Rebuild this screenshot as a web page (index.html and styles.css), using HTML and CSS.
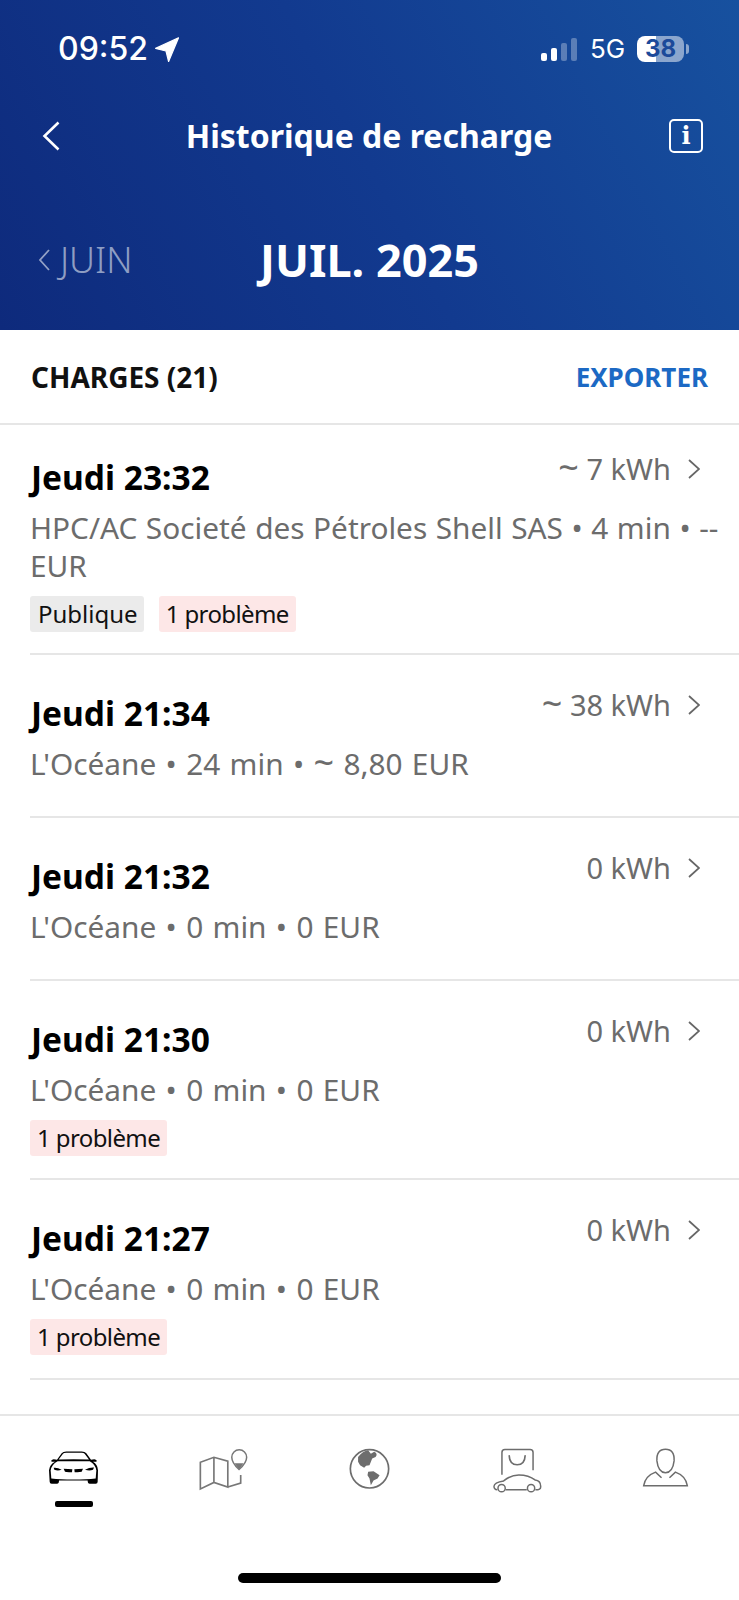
FILE: index.html
```html
<!DOCTYPE html>
<html lang="fr">
<head>
<meta charset="utf-8">
<title>Historique de recharge</title>
<link rel="stylesheet" href="styles.css">
</head>
<body>
<div class="app">
  <header class="hero">
    <div class="status">
      <div class="status-left">
        <span class="clock">09:52</span>
        <svg class="loc" viewBox="0 0 24 25"><path d="M23.5 .8 L13.6 24.6 L11 14 L.6 11.4 Z" fill="#fff" stroke="#fff" stroke-width="1.2" stroke-linejoin="round"/></svg>
      </div>
      <div class="status-right">
        <div class="signal"><i class="b1"></i><i class="b2"></i><i class="b3"></i><i class="b4"></i></div>
        <span class="net">5G</span>
        <div class="battery"><span class="batt-num">38</span></div>
        <span class="nub"></span>
      </div>
    </div>
    <div class="navbar">
      <svg class="back" viewBox="0 0 18 30"><path d="M16.5 1.5 L2.5 15 L16.5 28.5" fill="none" stroke="#fff" stroke-width="2.6"/></svg>
      <h1 class="nav-title">Historique de recharge</h1>
      <div class="info"><span class="info-i">i</span></div>
    </div>
    <div class="months">
      <div class="prev">
        <svg class="prev-chev" viewBox="0 0 12 22"><path d="M11 1 L2 11 L11 21" fill="none" stroke="#fff" stroke-width="1.8"/></svg>
        <span>JUIN</span>
      </div>
      <div class="current">JUIL. 2025</div>
    </div>
  </header>

  <div class="section-bar">
    <span class="section-title">CHARGES (21)</span>
    <span class="export">EXPORTER</span>
  </div>

  <main class="list">
    <article class="row row-a">
      <div class="row-top">
        <span class="when">Jeudi 23:32</span>
        <span class="energy"><span class="val"><span class="tilde">~</span> 7 kWh</span><svg class="chev" viewBox="0 0 12 20"><path d="M1 1 L11 10 L1 19" fill="none" stroke="#666" stroke-width="1.7"/></svg></span>
      </div>
      <p class="desc">HPC/AC Societé des Pétroles Shell SAS • 4 min • -- EUR</p>
      <div class="tags"><span class="tag tag-grey">Publique</span><span class="tag tag-red">1 problème</span></div>
    </article>
    <article class="row row-b">
      <div class="row-top">
        <span class="when">Jeudi 21:34</span>
        <span class="energy"><span class="val"><span class="tilde">~</span> 38 kWh</span><svg class="chev" viewBox="0 0 12 20"><path d="M1 1 L11 10 L1 19" fill="none" stroke="#666" stroke-width="1.7"/></svg></span>
      </div>
      <p class="desc desc-short">L'Océane • 24 min • <span class="tilde">~</span> 8,80 EUR</p>
    </article>
    <article class="row row-b">
      <div class="row-top">
        <span class="when">Jeudi 21:32</span>
        <span class="energy"><span class="val">0 kWh</span><svg class="chev" viewBox="0 0 12 20"><path d="M1 1 L11 10 L1 19" fill="none" stroke="#666" stroke-width="1.7"/></svg></span>
      </div>
      <p class="desc desc-short">L'Océane • 0 min • 0 EUR</p>
    </article>
    <article class="row row-c">
      <div class="row-top">
        <span class="when">Jeudi 21:30</span>
        <span class="energy"><span class="val">0 kWh</span><svg class="chev" viewBox="0 0 12 20"><path d="M1 1 L11 10 L1 19" fill="none" stroke="#666" stroke-width="1.7"/></svg></span>
      </div>
      <p class="desc desc-short">L'Océane • 0 min • 0 EUR</p>
      <div class="tags"><span class="tag tag-red">1 problème</span></div>
    </article>
    <article class="row row-c">
      <div class="row-top">
        <span class="when">Jeudi 21:27</span>
        <span class="energy"><span class="val">0 kWh</span><svg class="chev" viewBox="0 0 12 20"><path d="M1 1 L11 10 L1 19" fill="none" stroke="#666" stroke-width="1.7"/></svg></span>
      </div>
      <p class="desc desc-short">L'Océane • 0 min • 0 EUR</p>
      <div class="tags"><span class="tag tag-red">1 problème</span></div>
    </article>
  </main>

  <nav class="tabbar">
    <div class="tab tab-car">
      <svg class="ic-car" viewBox="58 68 147 98">
        <path d="M60 160 L58 125 Q60 108 76 100 L66 100 Q62 94 72 92 L82 94 L96 74 Q100 69 110 69 L156 69 Q166 69 170 74 L184 94 L194 92 Q204 94 200 100 L190 100 Q204 108 205 125 L204 160 Q204 166 198 166 L180 166 Q174 166 174 156 L88 156 Q88 166 82 166 L66 166 Q60 166 60 160 Z" fill="#000"/>
        <path d="M65 150 L63 126 Q65 108 84 98 L180 98 Q198 108 200 126 L198 150 Q170 153 131 153 Q92 153 65 150 Z" fill="#fff"/>
        <path d="M87 93 L100 76 Q102 73 110 73 L156 73 Q162 73 165 76 L178 93 Q131 91 87 93 Z" fill="#fff"/>
        <path d="M72 118 Q82 116 96 124 Q84 128 74 124 Z M102 121 L128 122 L127 131 Q112 132 106 130 Z M134 122 L160 121 L156 130 Q148 132 135 131 Z M166 124 Q180 116 193 117 L190 124 Q180 128 166 124 Z" fill="#000"/>
      </svg>
      <span class="active-bar"></span>
    </div>
    <div class="tab tab-map">
      <svg class="ic-map" viewBox="505 52 155 130">
        <path d="M511 176 L511 95 L552 80 L594 92 L594 170 L552 156 L511 176 Z M552 80 L552 156 M594 170 L633 158 L633 134" fill="none" stroke="#777" stroke-width="5"/>
        <path d="M628 117 Q606 97 606 80 A22 22 0 1 1 651 80 Q651 97 628 117 Z" fill="none" stroke="#777" stroke-width="4.5"/>
        <path d="M614 98 L642 98 L628 117 Z" fill="#777"/>
      </svg>
    </div>
    <div class="tab">
      <svg class="ic-globe" viewBox="57 55 122 122">
        <circle cx="118" cy="117" r="57" fill="#fff" stroke="#6d6d6d" stroke-width="5"/>
        <path d="M84 82 Q98 64 114 62 L122 72 L132 66 Q144 72 136 82 L126 86 L118 106 L108 108 L102 114 L90 106 L84 96 Z" fill="#6d6d6d"/>
        <path d="M114 126 L130 124 L148 136 L142 146 L130 152 L122 166 L118 146 L112 136 Z" fill="#6d6d6d"/>
      </svg>
    </div>
    <div class="tab">
      <svg class="ic-bag" viewBox="488 55 148 135">
        <path d="M515 135 L515 68 Q515 59 524 59 L600 59 Q609 59 609 68 L609 122" fill="none" stroke="#6d6d6d" stroke-width="4.5"/>
        <path d="M537 78 Q538 105 561 105 Q584 105 585 78" fill="none" stroke="#6d6d6d" stroke-width="5" stroke-linecap="round"/>
        <path d="M501 181 Q491 180 491 170 Q492 158 520 154 Q542 136 566 136 Q596 136 615 151 Q633 153 632 172 Q632 181 616 181 M526 181 L590 181" fill="none" stroke="#6d6d6d" stroke-width="4.5"/>
        <circle cx="514" cy="176" r="11" fill="#fff" stroke="#6d6d6d" stroke-width="4.5"/>
        <circle cx="603" cy="176" r="11" fill="#fff" stroke="#6d6d6d" stroke-width="4.5"/>
      </svg>
    </div>
    <div class="tab">
      <svg class="ic-user" viewBox="934 58 142 118">
        <path d="M1005 62 Q977 62 979 97 Q983 132 1005 133 Q1027 132 1031 97 Q1033 62 1005 62 Z" fill="none" stroke="#6d6d6d" stroke-width="4.5"/>
        <path d="M993 148 L975 131 Q944 142 939 172 L1071 172 Q1066 142 1035 131 L1017 148" fill="none" stroke="#6d6d6d" stroke-width="4.5"/>
      </svg>
    </div>
  </nav>
  <div class="home-wrap"><span class="home"></span></div>
</div>
</body>
</html>
```

FILE: styles.css
```css
* { box-sizing: border-box; margin: 0; padding: 0; }
html, body { background: #fff; }
body { font-family: "Noto Sans", "Open Sans", sans-serif; }
.app { width: 739px; height: 1600px; display: flex; flex-direction: column; overflow: hidden; }

.hero {
  height: 330px;
  flex: none;
  background: linear-gradient(62deg, #0e2a7c 0%, #123a8f 50%, #17519f 100%);
  color: #fff;
  padding-top: 32px;
}
.status { display: flex; justify-content: space-between; align-items: center; height: 34px; padding: 0 50px 0 58px; }
.status-left { display: flex; align-items: center; gap: 7px; }
.clock { font-family: Inter, sans-serif; font-size: 32px; font-weight: 500; line-height: 34px; }
.loc { width: 24px; height: 25px; display: block; }
.status-right { display: flex; align-items: center; }
.signal { display: flex; align-items: flex-end; gap: 4px; height: 23px; }
.signal i { display: block; width: 6px; border-radius: 2px; background: #fff; }
.signal .b1 { height: 8px; }
.signal .b2 { height: 13px; }
.signal .b3 { height: 18px; opacity: .3; }
.signal .b4 { height: 23px; opacity: .3; }
.net { font-family: Inter, sans-serif; font-size: 26px; font-weight: 400; line-height: 30px; margin-left: 13px; width: 47px; }
.battery {
  width: 47px; height: 26px; border-radius: 8px;
  background: linear-gradient(90deg, #fff 0, #fff 40%, rgba(255,255,255,.5) 40%, rgba(255,255,255,.5) 100%);
  display: flex; align-items: center; justify-content: center;
}
.batt-num { font-family: Inter, sans-serif; font-size: 24px; font-weight: 700; color: #1c4a9a; line-height: 26px; }
.nub { width: 3px; height: 10px; margin-left: 2px; border-radius: 0 3px 3px 0; background: rgba(255,255,255,.5); }

.navbar { display: flex; align-items: center; justify-content: space-between; height: 40px; margin-top: 50px; padding: 0 36px 0 42px; }
.back { width: 18px; height: 30px; display: block; }
.nav-title { font-size: 32px; font-weight: 700; line-height: 40px; margin-left: 9px; }
.info { width: 34px; height: 34px; border: 2.4px solid #fff; border-radius: 5px; display: flex; align-items: center; justify-content: center; }
.info-i { font-family: "DejaVu Serif", serif; font-size: 24px; font-weight: 700; line-height: 28px; }

.months { display: flex; align-items: center; height: 48px; margin-top: 80px; padding-left: 38px; }
.prev { display: flex; align-items: center; gap: 10px; width: 222px; color: rgba(255,255,255,.55); font-size: 36px; font-weight: 300; line-height: 48px; }
.prev-chev { width: 12px; height: 22px; display: block; opacity: .55; }
.current { font-size: 45px; font-weight: 700; line-height: 48px; }

.section-bar { height: 95px; flex: none; display: flex; align-items: center; justify-content: space-between; padding: 0 31px; border-bottom: 2px solid #e6e6e6; }
.section-title { font-size: 28px; font-weight: 700; color: #111; }
.export { font-size: 26px; font-weight: 700; color: #1c69c4; }

.list { flex: none; padding-left: 30px; }
.row { border-bottom: 2px solid #e6e6e6; padding-top: 35px; }
.row-a { height: 230px; padding-top: 29px; }
.row-b { height: 163px; }
.row-c { height: 199px; }
.row-c:last-child { height: 200px; }
.row-top { display: flex; justify-content: space-between; align-items: flex-start; padding-right: 39px; }
.when { font-size: 33.5px; font-weight: 700; line-height: 46px; color: #000; margin-left: 1px; }
.energy { display: flex; align-items: center; gap: 17px; font-size: 29px; line-height: 30px; color: #6c6c6c; }
.chev { width: 12px; height: 20px; display: block; }
.tilde { font-size: 36px; line-height: 20px; vertical-align: -1px; }
.desc { font-size: 29.8px; word-spacing: .8px; line-height: 38px; color: #6c6c6c; margin-top: 9px; padding-right: 10px; }
.desc-short { word-spacing: 1.6px; }
.tags { display: flex; gap: 15px; margin-top: 11px; }
.tag { height: 36px; border-radius: 3px; font-size: 24px; line-height: 36px; color: #111; }
.tag-grey { background: #ebebeb; padding: 0 6px 0 8px; }
.tag-red { background: #fde7e7; padding: 0 7px; letter-spacing: -.6px; }

.tabbar { margin-top: 34px; border-top: 2px solid #e6e6e6; height: 122px; flex: none; display: grid; grid-template-columns: repeat(5, 1fr); }
.tab { position: relative; display: flex; flex-direction: column; align-items: center; padding-top: 32px; }
.tab svg { display: block; }
.ic-car { width: 49px; height: 33px; margin-top: 3px; }
.active-bar { width: 38px; height: 6px; background: #000; border-radius: 2px; margin-top: 17px; }
.ic-map { width: 52px; height: 43px; margin-left: 5px; }
.ic-globe { width: 41px; height: 41px; }
.ic-bag { width: 49px; height: 45px; }
.ic-user { width: 47px; height: 39px; }

.home-wrap { flex: 1; display: flex; justify-content: center; padding-top: 37px; }
.home { width: 263px; height: 10px; border-radius: 5px; background: #000; }
```
